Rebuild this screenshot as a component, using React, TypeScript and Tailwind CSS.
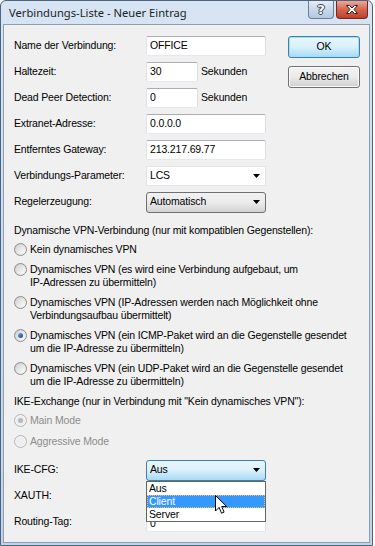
import React from 'react';

const Label = ({ children }: { children: React.ReactNode }) => (
  <div className="w-[132px] shrink-0 whitespace-nowrap">{children}</div>
);

const TextBox = ({ value, w = 'w-[120px]' }: { value: string; w?: string }) => (
  <div className={`${w} h-[20px] bg-white border border-[#abadb3] border-l-[#e2e3ea] border-r-[#dbdfe6] border-b-[#e3e9ef] rounded-[2px] flex items-center pl-[3px]`}>
    {value}
  </div>
);

const Arrow = () => (
  <svg width="7" height="4" viewBox="0 0 7 4" className="shrink-0">
    <path d="M0 0h7L3.5 4z" fill="#000" />
  </svg>
);

const Radio = ({ checked, disabled }: { checked?: boolean; disabled?: boolean }) => (
  <div
    className={`w-[13px] h-[13px] rounded-full border shrink-0 flex items-center justify-center ${
      disabled ? 'border-[#b5b5b5] bg-[#f4f4f4]' : 'border-[#8e8f8f] bg-gradient-to-br from-[#c9c9c9] to-[#f8f8f8]'
    }`}
  >
    <div className={`w-[9px] h-[9px] rounded-full flex items-center justify-center ${disabled ? 'bg-[#eeeeee]' : 'bg-gradient-to-br from-[#d4d4d4] to-[#fcfcfc]'}`}>
      {checked && (
        <div className={`w-[5px] h-[5px] rounded-full ${disabled ? 'bg-[#b8b8b8]' : 'bg-gradient-to-br from-[#6fb3ef] to-[#0f3f7f]'}`} />
      )}
    </div>
  </div>
);

const RadioItem = ({ lines, checked, disabled }: { lines: string[]; checked?: boolean; disabled?: boolean }) => (
  <div className={`flex items-start gap-[3px] ${disabled ? 'text-[#8d8d8d]' : 'text-black'}`}>
    <Radio checked={checked} disabled={disabled} />
    <div className="leading-[13px] whitespace-nowrap">
      {lines.map((l) => (
        <div key={l}>{l}</div>
      ))}
    </div>
  </div>
);

const Row = ({ label, children }: { label: string; children?: React.ReactNode }) => (
  <div className="h-[26px] flex items-center">
    <Label>{label}</Label>
    {children}
  </div>
);

export default function App() {
  return (
    <div className="w-[375px] h-[546px] bg-white overflow-hidden font-['Liberation_Sans',sans-serif] text-[10.5px] tracking-[-0.15px] text-black">
      <div className="w-[373px] h-[546px] rounded-t-[6px] border border-[#4e637c] bg-gradient-to-b from-[#d6e4f3] to-[#c0d3e9] flex flex-col px-[2px] pb-[2px]">
        {/* Title bar */}
        <div className="h-[23px] shrink-0 flex items-start justify-between">
          <div className="pl-[6px] pt-[5px] text-[11.2px] tracking-normal font-['Noto_Sans',sans-serif] leading-[14px] text-[#1e1e1e]">
            Verbindungs-Liste - Neuer Eintrag
          </div>
          <div className="flex gap-[2px] pr-[2px]">
            <div className="w-[26px] h-[18px] rounded-b-[4px] border border-t-0 border-[#6d7f95] bg-gradient-to-b from-[#e4edf7] via-[#c9d8ea] to-[#b5c8df] flex items-center justify-center text-white font-bold text-[13px] font-['DejaVu_Sans',sans-serif] [text-shadow:0_0_1px_#2a3a4c,1px_0_0_#3a4a5c,-1px_0_0_#3a4a5c,0_1px_0_#3a4a5c,0_-1px_0_#3a4a5c]">
              ?
            </div>
            <div className="w-[32px] h-[18px] rounded-b-[4px] border border-t-0 border-[#6a2a22] bg-gradient-to-b from-[#e9a99b] via-[#d5634f] to-[#c0402a] flex items-center justify-center">
              <svg width="14" height="11" viewBox="0 0 14 11">
                <path d="M1.5 1.5h3l2.5 2.5 2.5-2.5h3L9 5.5l3.5 4h-3L7 7l-2.5 2.5h-3L5 5.5z" fill="#fff" stroke="#3b1a14" strokeWidth="1" strokeLinejoin="round" />
              </svg>
            </div>
          </div>
        </div>

        {/* Client area */}
        <div className="flex-1 bg-[#f0f0f0] border border-[#8c9fb5] relative pl-[10px] pt-[8px]">
          <div className="flex">
            <div className="w-[252px] shrink-0">
              <Row label="Name der Verbindung:"><TextBox value="OFFICE" /></Row>
              <Row label="Haltezeit:">
                <TextBox value="30" w="w-[52px]" />
                <span className="ml-[3px]">Sekunden</span>
              </Row>
              <Row label="Dead Peer Detection:">
                <TextBox value="0" w="w-[52px]" />
                <span className="ml-[3px]">Sekunden</span>
              </Row>
              <Row label="Extranet-Adresse:"><TextBox value="0.0.0.0" /></Row>
              <Row label="Entferntes Gateway:"><TextBox value="213.217.69.77" /></Row>
              <Row label="Verbindungs-Parameter:">
                <div className="w-[120px] h-[20px] bg-white border border-[#e2e3ea] flex items-center justify-between pl-[3px] pr-[5px]">
                  <span>LCS</span>
                  <Arrow />
                </div>
              </Row>
              <Row label="Regelerzeugung:">
                <div className="w-[120px] h-[21px] rounded-[3px] border border-[#707070] bg-gradient-to-b from-[#f2f2f2] via-[#ebebeb] to-[#d3d3d3] flex items-center justify-between pl-[3px] pr-[5px]">
                  <span>Automatisch</span>
                  <Arrow />
                </div>
              </Row>
            </div>
            <div className="flex flex-col gap-[8px] pt-[3px] pl-[22px]">
              <div className="w-[72px] h-[22px] rounded-[3px] border border-[#3c7fb1] bg-gradient-to-b from-[#eaf6fd] via-[#d9f0fc] to-[#a7d9f5] shadow-[inset_0_0_0_1px_#9fe0f7] flex items-center justify-center">
                OK
              </div>
              <div className="w-[72px] h-[22px] rounded-[3px] border border-[#707070] bg-gradient-to-b from-[#f2f2f2] via-[#ebebeb] to-[#cfcfcf] shadow-[inset_0_0_0_1px_#fcfcfc] flex items-center justify-center">
                Abbrechen
              </div>
            </div>
          </div>

          <div className="mt-[9px] leading-[13px] whitespace-nowrap">Dynamische VPN-Verbindung (nur mit kompatiblen Gegenstellen):</div>
          <div className="flex flex-col gap-[7px] mt-[6px]">
            <RadioItem lines={['Kein dynamisches VPN']} />
            <RadioItem lines={['Dynamisches VPN (es wird eine Verbindung aufgebaut, um', 'IP-Adressen zu übermitteln)']} />
            <RadioItem lines={['Dynamisches VPN (IP-Adressen werden nach Möglichkeit ohne', 'Verbindungsaufbau übermittelt)']} />
            <RadioItem checked lines={['Dynamisches VPN (ein ICMP-Paket wird an die Gegenstelle gesendet', 'um die IP-Adresse zu übermitteln)']} />
            <RadioItem lines={['Dynamisches VPN (ein UDP-Paket wird an die Gegenstelle gesendet', 'um die IP-Adresse zu übermitteln)']} />
          </div>
          <div className="mt-[7px] leading-[13px] whitespace-nowrap">IKE-Exchange (nur in Verbindung mit "Kein dynamisches VPN"):</div>
          <div className="flex flex-col gap-[8px] mt-[6px]">
            <RadioItem disabled checked lines={['Main Mode']} />
            <RadioItem disabled lines={['Aggressive Mode']} />
          </div>

          <div className="mt-[9px]">
            <Row label="IKE-CFG:">
              <div className="relative">
                <div className="w-[120px] h-[21px] rounded-[3px] border border-[#3c7fb1] bg-gradient-to-b from-[#eaf6fd] via-[#d9f0fc] to-[#a7d9f5] flex items-center justify-between pl-[3px] pr-[5px]">
                  <span>Aus</span>
                  <Arrow />
                </div>
                {/* open drop-down list */}
                <div className="absolute left-0 top-[21px] w-[120px] z-10 bg-white border border-[#646464] leading-[13px]">
                  <div className="h-[13px] pl-[2px]">Aus</div>
                  <div className="h-[13px] pl-[2px] bg-[#3399ff] text-white outline-1 outline-dotted outline-[#f0c070] -outline-offset-1">Client</div>
                  <div className="h-[13px] pl-[2px]">Server</div>
                </div>
                <svg className="absolute left-[69px] top-[35px] z-20" width="13" height="20" viewBox="0 0 13 20">
                  <path d="M0.5 0.5v15.5l3.6-3.6 2.4 5.8 2.6-1.1-2.4-5.6h5z" fill="#fff" stroke="#000" strokeWidth="1" strokeLinejoin="miter" />
                </svg>
              </div>
            </Row>
            <Row label="XAUTH:">
              <div className="w-[120px] h-[20px] bg-white border border-[#e2e3ea]" />
            </Row>
            <Row label="Routing-Tag:">
              <div className="w-[120px] h-[20px] bg-white border border-[#abadb3] border-l-[#e2e3ea] border-r-[#dbdfe6] border-b-[#e3e9ef] rounded-[2px] pl-[3px] pt-[4px] leading-[13px] overflow-hidden">
                0
              </div>
            </Row>
          </div>
        </div>
      </div>
    </div>
  );
}
